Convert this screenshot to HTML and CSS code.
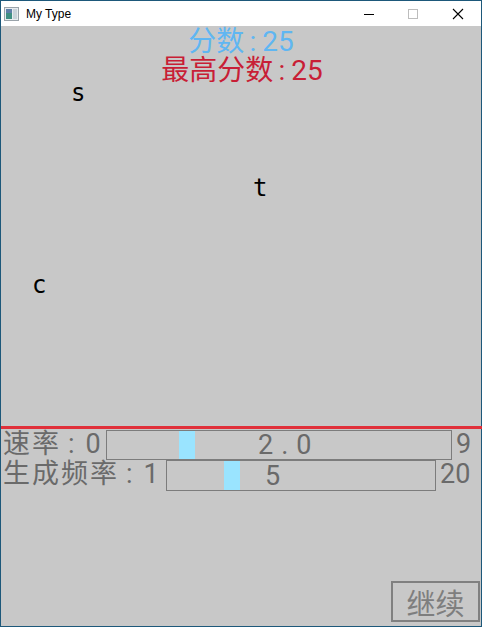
FILE: index.html
```html
<!DOCTYPE html>
<html>
<head>
<meta charset="utf-8">
<link rel="stylesheet" href="styles.css">
</head>
<body>
<div class="window">
  <div class="titlebar">
    <svg class="app-icon" width="15" height="14" viewBox="0 0 15 14">
      <rect x="0.5" y="0.5" width="14" height="13" fill="#e8ecef" stroke="#9aa3aa"/>
      <rect x="2" y="2" width="6" height="10" fill="#3f8f83"/>
      <rect x="2" y="2" width="6" height="4" fill="#5f7fa8"/>
      <rect x="9" y="2" width="4" height="10" fill="#c9d3da"/>
    </svg>
    <span class="title">My Type</span>
    <div class="controls">
      <span class="ctl"><svg width="12" height="12" viewBox="0 0 12 12"><path d="M1 6.5h10" stroke="#000" stroke-width="1"/></svg></span>
      <span class="ctl"><svg width="12" height="12" viewBox="0 0 12 12"><rect x="1.5" y="1.5" width="9" height="9" fill="none" stroke="#bdbdbd"/></svg></span>
      <span class="ctl"><svg width="12" height="12" viewBox="0 0 12 12"><path d="M1 1L11 11M11 1L1 11" stroke="#000" stroke-width="1.1"/></svg></span>
    </div>
  </div>
  <div class="content">
    <div class="canvas">
      <div class="score">分数<span class="colon">:</span>25</div>
      <div class="best">最高分数<span class="colon">:</span>25</div>
      <span class="letter" style="left:70px;top:52px">s</span>
      <span class="letter" style="left:252px;top:147px">t</span>
      <span class="letter" style="left:31px;top:244px">c</span>
    </div>
    <div class="redline"></div>
    <div class="row">
      <span class="label l1">速率<span class="lcolon">:</span>0</span>
      <div class="slider s1">
        <div class="thumb" style="left:72px"></div>
        <span class="val v1">2.0</span>
      </div>
      <span class="max">9</span>
    </div>
    <div class="row">
      <span class="label l2">生成频率<span class="lcolon">:</span>1</span>
      <div class="slider s2">
        <div class="thumb" style="left:57px"></div>
        <span class="val v2">5</span>
      </div>
      <span class="max">20</span>
    </div>
    <div class="spacer"></div>
    <div class="footer">
      <button class="btn">继续</button>
    </div>
  </div>
</div>
</body>
</html>
```
FILE: styles.css
```css
* { box-sizing: border-box; }
html, body { margin: 0; padding: 0; }
body { width: 482px; height: 627px; overflow: hidden; }
.window {
  width: 482px; height: 627px;
  border: 1px solid #1d587a;
  display: flex; flex-direction: column;
  background: #c8c8c8;
}
.titlebar {
  height: 25px; background: #fff;
  display: flex; align-items: center;
  font-family: "Liberation Sans", Arial, sans-serif; font-size: 12px; color: #000;
}
.app-icon { margin-left: 3px; margin-right: 7px; }
.title { flex: 1; }
.controls { display: flex; }
.ctl { width: 44px; height: 25px; display: flex; align-items: center; justify-content: center; }
.ctl:last-child { width: 46px; }
.content { flex: 1; display: flex; flex-direction: column; background: #c8c8c8; }
.canvas { position: relative; height: 400px; display: flex; flex-direction: column; align-items: center;
  font-family: Roboto, "Noto Sans CJK SC", sans-serif; font-size: 28px; line-height: 29px; }
.colon { margin: 0 6px 0 5px; }
.score { color: #5fb6f2; margin-top: 1px; }
.best { color: #c81e36; margin-left: 2px; }
.letter { position: absolute; font-family: "DejaVu Sans Mono", monospace; font-size: 24px; line-height: 30px; color: #000; }
.redline { height: 3px; background: #e0303a; margin-right: -1px; }
.row { display: flex; align-items: stretch; height: 30px; margin-top: 1px;
  font-family: Roboto, "Noto Sans CJK SC", sans-serif; font-size: 27px; color: #6a6a6a; line-height: 28px; }
.row + .row { margin-top: 0; }
.label { padding-left: 2px; white-space: nowrap; letter-spacing: 2px; }
.lcolon { margin: 0 9px 0 7px; }
.l1 { width: 105px; }
.l2 { width: 165px; }
.slider { position: relative; border: 1px solid #7c7c7c; display: flex; align-items: center; }
.s1 { width: 346px; height: 30px; }
.s2 { width: 270px; height: 31px; }
.thumb { position: absolute; top: 0; bottom: 0; width: 16px; background: #9ae4ff; }
.val { position: relative; letter-spacing: 8px; font-size: 27px; }
.v1 { margin-left: 151px; }
.v2 { margin-left: 98px; }
.max { padding-left: 4px; }
.spacer { flex: 1; }
.footer { display: flex; justify-content: flex-end; padding: 0 1px 4px 0; }
.btn { width: 89px; height: 41px; border: 2px solid #808080; background: #c8c8c8;
  font-family: "Noto Sans CJK SC", sans-serif; font-size: 29px; color: #7e7e7e; padding: 0; line-height: 36px; }
```
